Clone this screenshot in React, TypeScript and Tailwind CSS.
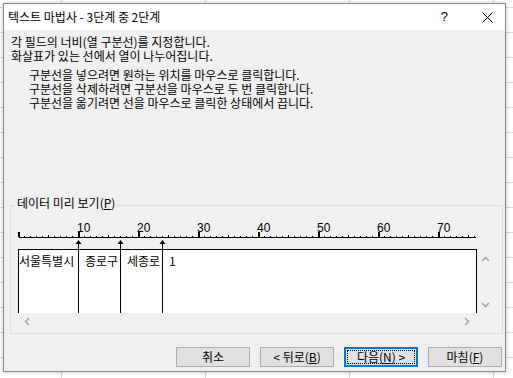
import React from "react";

const FONT = "font-['Noto_Sans_CJK_KR','Noto_Sans',sans-serif]";

function Ruler() {
  const ticks: React.ReactNode[] = [];
  for (let c = 0; c <= 76; c++) {
    const x = 1 + 6 * c;
    if (c % 10 === 0) {
      ticks.push(<rect key={"t" + c} x={x - 1} y={12} width={2} height={5} fill="#000" />);
      if (c > 0)
        ticks.push(
          <text key={"n" + c} x={x - 2} y={12} fontSize={12} fontFamily="'Liberation Sans Narrow','Liberation Sans',sans-serif" fill="#000">
            {c}
          </text>
        );
    } else if (c % 5 === 0) {
      ticks.push(<rect key={"t" + c} x={x - 1} y={15} width={1} height={2} fill="#000" />);
    } else {
      ticks.push(<rect key={"t" + c} x={x - 1} y={16} width={1} height={1} fill="#000" />);
    }
  }
  return (
    <svg width={460} height={29} className="block">
      <rect x={1} y={17} width={457} height={1} fill="#000" />
      {ticks}
    </svg>
  );
}

function Breaks() {
  const cols = [10, 17, 24];
  return (
    <svg width={460} height={73} className="absolute left-0 top-[20px]">
      {cols.map((c) => {
        const x = 6 * c;
        return (
          <g key={c}>
            <polygon points={`${x + 0.5},0 ${x - 2.5},4 ${x + 3.5},4`} fill="#000" />
            <rect x={x} y={4} width={1} height={69} fill="#000" />
          </g>
        );
      })}
    </svg>
  );
}

function Chevron({ dir }: { dir: "left" | "right" | "up" | "down" }) {
  const pts: Record<string, string> = {
    left: "5,1 1.5,4.5 5,8",
    right: "1,1 4.5,4.5 1,8",
    up: "1,5 4.5,1.5 8,5",
    down: "1,1 4.5,4.5 8,1",
  };
  const horiz = dir === "left" || dir === "right";
  return (
    <svg width={horiz ? 6 : 9} height={horiz ? 9 : 6} className="block">
      <polyline points={pts[dir]} fill="none" stroke="#a6a6a6" strokeWidth={1.6} />
    </svg>
  );
}

function Btn({ children, focused }: { children: React.ReactNode; focused?: boolean }) {
  return (
    <div
      className={`w-[74px] h-[20px] flex items-center justify-center bg-[#e1e1e1] text-[12px] leading-[14px] text-black ${
        focused ? "border-2 border-[#0078d7] p-[1px]" : "border border-[#adadad]"
      }`}
    >
      {focused ? (
        <div className="w-full h-full border border-dotted border-black flex items-center justify-center">{children}</div>
      ) : (
        children
      )}
    </div>
  );
}

export default function App() {
  return (
    <div
      className={`w-[513px] h-[378px] overflow-hidden bg-white pt-[3px] pl-[3px] ${FONT} bg-[linear-gradient(to_right,#d9d9d9_1px,transparent_1px),linear-gradient(to_bottom,#d9d9d9_1px,transparent_1px)] bg-[size:144px_25px] bg-[position:61px_7px]`}
    >
      <div className="w-[503px] h-[369px] border border-[#8a8a8a] bg-[#f0f0f0] flex flex-col text-black shadow-[0_0_4px_rgba(0,0,0,0.25)]">
        <div className="h-[26px] bg-white flex items-center pl-[4px] text-[12px]">
          <span>텍스트 마법사 - 3단계 중 2단계</span>
          <span className="ml-auto mr-[34px] text-[13px] font-['Liberation_Sans',sans-serif]">?</span>
          <svg width={11} height={11} className="mr-[12px]">
            <path d="M0.5 0.5 L10.5 10.5 M10.5 0.5 L0.5 10.5" stroke="#000" strokeWidth={1} />
          </svg>
        </div>
        <div className="flex flex-col pt-[5px] text-[12px] leading-[14px]">
          <div className="pl-[7px]">
            <div>각 필드의 너비(열 구분선)를 지정합니다.</div>
            <div>화살표가 있는 선에서 열이 나누어집니다.</div>
          </div>
          <div className="pl-[25px] mt-[5px]">
            <div>구분선을 넣으려면 원하는 위치를 마우스로 클릭합니다.</div>
            <div>구분선을 삭제하려면 구분선을 마우스로 두 번 클릭합니다.</div>
            <div>구분선을 옮기려면 선을 마우스로 클릭한 상태에서 끕니다.</div>
          </div>
          <fieldset className="ml-[6px] mt-[86px] w-[493px] h-[138px] border border-[#dcdcdc]">
            <legend className="ml-[4px] px-[2px] pb-[4px] leading-[14px]">
              데이터 미리 보기(<span className="underline">P</span>)
            </legend>
            <div className="pl-[7px] pt-[6px]">
              <div className="relative w-[476px]">
                <Ruler />
                <div className="flex">
                  <div className="w-[459px] h-[64px] bg-white border-t border-l border-r border-black pl-0 pt-[4px] text-[12px] leading-[14px] flex items-start">
                    <span className="w-[66px] tracking-[0px]">서울특별시</span>
                    <span className="w-[42px]">종로구</span>
                    <span className="w-[42px]">세종로</span>
                    <span>1</span>
                  </div>
                  <div className="w-[17px] h-[64px] flex flex-col items-center justify-between pt-[7px] pb-[5px]">
                    <Chevron dir="up" />
                    <Chevron dir="down" />
                  </div>
                </div>
                <div className="w-[459px] h-[17px] flex items-center justify-between pl-[6px] pr-[7px]">
                  <Chevron dir="left" />
                  <Chevron dir="right" />
                </div>
                <Breaks />
              </div>
            </div>
          </fieldset>
          <div className="flex gap-[10px] pl-[172px] mt-[13px]">
            <Btn>취소</Btn>
            <Btn>
              &lt; 뒤로(<span className="underline">B</span>)
            </Btn>
            <Btn focused>
              다음(<span className="underline">N</span>) &gt;
            </Btn>
            <Btn>
              마침(<span className="underline">F</span>)
            </Btn>
          </div>
        </div>
      </div>
    </div>
  );
}
